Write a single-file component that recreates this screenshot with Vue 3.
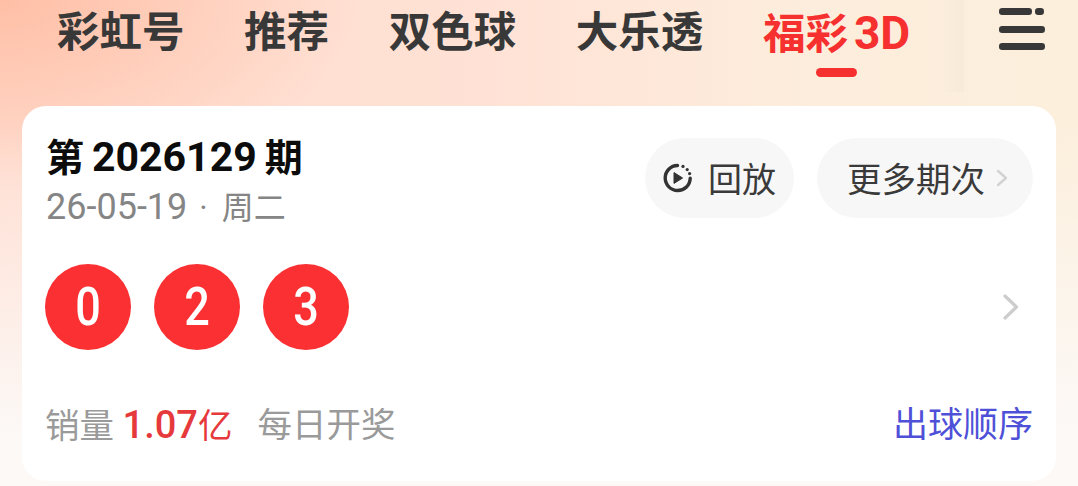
<script setup>
const tabs = ['彩虹号', '推荐', '双色球', '大乐透']
const balls = ['0', '2', '3']
</script>

<template>
  <div class="page">
    <header class="top">
      <nav class="tabs">
        <span v-for="t in tabs" :key="t" class="tab">{{ t }}</span>
        <span class="tab active">福彩<span class="latin">3D</span><i class="underline"></i></span>
      </nav>
      <div class="menu">
        <svg width="48" height="42" viewBox="0 0 48 42">
          <g fill="#383838">
            <rect x="2" y="0" width="33" height="7" rx="3.2" />
            <rect x="38" y="0" width="9" height="7" rx="3.2" />
            <rect x="2" y="18" width="46" height="7" rx="3.2" />
            <rect x="2" y="35" width="46" height="7" rx="3.2" />
          </g>
        </svg>
      </div>
    </header>

    <section class="card">
      <div class="head">
        <div class="info">
          <div class="issue">第<span class="num">2026129</span>期</div>
          <div class="date"><span class="digits">26-05-19</span><span class="sep">·</span>周二</div>
        </div>
        <div class="actions">
          <button class="pill replay">
            <svg width="34" height="34" viewBox="0 0 34 34" fill="none">
              <path d="M16.5 4.5 A12.5 12.5 0 1 0 29.2 17.2" stroke="#333" stroke-width="3.4" stroke-linecap="round" />
              <circle cx="22" cy="5.4" r="1.6" fill="#333" />
              <circle cx="26.2" cy="8.6" r="1.6" fill="#333" />
              <circle cx="28.6" cy="12.6" r="1.6" fill="#333" />
              <path d="M13 11.6 L21.6 17 L13 22.4 Z" fill="#333" stroke="#333" stroke-width="1" stroke-linejoin="round" />
            </svg>
            <span class="nowrap label">回放</span>
          </button>
          <button class="pill more">
            <span class="nowrap label">更多期次</span>
            <svg width="12" height="20" viewBox="0 0 12 20" fill="none">
              <path d="M2 3 L10 10 L2 17" stroke="#d2d2d2" stroke-width="2.4" stroke-linecap="round" stroke-linejoin="round" />
            </svg>
          </button>
        </div>
      </div>

      <div class="balls-row">
        <div class="balls">
          <span v-for="(b, i) in balls" :key="i" class="ball"><span class="digit">{{ b }}</span></span>
        </div>
        <svg width="18" height="28" viewBox="0 0 18 28" fill="none">
          <path d="M3 3 L14.5 14 L3 25" stroke="#cdcdcd" stroke-width="3.2" stroke-linecap="round" stroke-linejoin="round" />
        </svg>
      </div>

      <div class="foot">
        <div class="stats">
          <span>销量 <em class="amount"><span class="amount-num">1.07</span>亿</em></span>
          <span>每日开奖</span>
        </div>
        <a class="order">出球顺序</a>
      </div>
    </section>
  </div>
</template>

<style>
html, body { margin: 0; background: #fff; }
</style>

<style scoped>
.page {
  position: relative;
  width: 1078px;
  height: 486px;
  overflow: hidden;
  box-sizing: border-box;
  padding: 0 22px;
  font-family: Roboto, "Noto Sans CJK SC", sans-serif;
  background:
    linear-gradient(180deg, rgba(253,248,245,0) 25%, #fcf9f7 90%),
    radial-gradient(ellipse 360px 190px at 0 0, #ffbfa6 0%, rgba(255,197,173,0) 100%),
    linear-gradient(90deg, #ffdccf 0%, #ffe2d5 45%, #fdeddc 75%, #fcefdc 100%);
}
.top {
  height: 106px;
  display: flex;
  align-items: flex-start;
  justify-content: space-between;
  padding: 0 11px 0 35px;
}
.tabs {
  display: flex;
  gap: 59.6px;
  padding-top: 10px;
}
.tab {
  position: relative;
  font-size: 42.5px;
  line-height: 46px;
  font-weight: 700;
  color: #383838;
  white-space: nowrap;
}
.tab.active { color: #f5302f; }
.latin { margin-left: 6px; font-size: 46px; }
.underline {
  position: absolute;
  left: 50%;
  top: 58px;
  width: 41px;
  height: 9px;
  margin-left: -21px;
  border-radius: 5px;
  background: #f5302f;
}
.menu { position: relative; padding-top: 8px; }
.menu svg { display: block; position: relative; }
.menu::before {
  content: '';
  position: absolute;
  top: 0;
  left: -57px;
  width: 24px;
  height: 92px;
  background: linear-gradient(90deg, rgba(225,215,195,0), rgba(225,215,195,0.18));
}
.card {
  height: 375px;
  box-sizing: border-box;
  background: #fff;
  border-radius: 24px;
  padding: 28px 23px 0 24px;
}
.head {
  display: flex;
  justify-content: space-between;
  align-items: flex-start;
}
.issue {
  font-size: 38px;
  line-height: 46px;
  font-weight: 700;
  color: #0c0c0c;
  white-space: nowrap;
}
.num { margin: 0 8px 0 8px; font-size: 41px; }
.date {
  font-size: 32px;
  line-height: 42px;
  margin-top: 5px;
  color: #858585;
  white-space: nowrap;
}
.digits { font-size: 36px; font-weight: 400; }
.sep { margin: 0 14px 0 12px; }
.actions {
  display: flex;
  gap: 23px;
  padding-top: 4px;
}
.nowrap { white-space: nowrap; }
.label { position: relative; top: -1px; }
.pill {
  display: flex;
  align-items: center;
  height: 80px;
  box-sizing: border-box;
  border: 0;
  border-radius: 40px;
  background: #f7f7f7;
  color: #3a3a3a;
  font: inherit;
  font-size: 34.5px;
}
.replay { padding: 0 0 0 16px; gap: 13px; width: 149px; font-size: 34px; }
.more { padding: 0 0 0 30px; gap: 11px; width: 216px; }
.balls-row {
  display: flex;
  align-items: center;
  justify-content: space-between;
  margin-top: 35px;
  padding-right: 13px;
}
.balls { display: flex; gap: 23px; margin-left: -1px; }
.ball {
  width: 86px;
  height: 86px;
  border-radius: 50%;
  background: #fa3033;
  color: #fff;
  display: flex;
  align-items: center;
  justify-content: center;
}
.digit {
  display: block;
  font-size: 53px;
  line-height: 60px;
  font-weight: 500;
  transform: scaleX(0.85);
}
.foot {
  display: flex;
  justify-content: space-between;
  align-items: center;
  margin-top: 53px;
  font-size: 34.5px;
  line-height: 44px;
  color: #9a9a9a;
}
.stats { display: flex; gap: 25px; margin-left: -1px; }
.amount { font-style: normal; color: #e6393c; }
.amount-num { font-weight: 500; font-size: 38px; }
.order { color: #4f50d8; font-size: 35px; }
</style>
